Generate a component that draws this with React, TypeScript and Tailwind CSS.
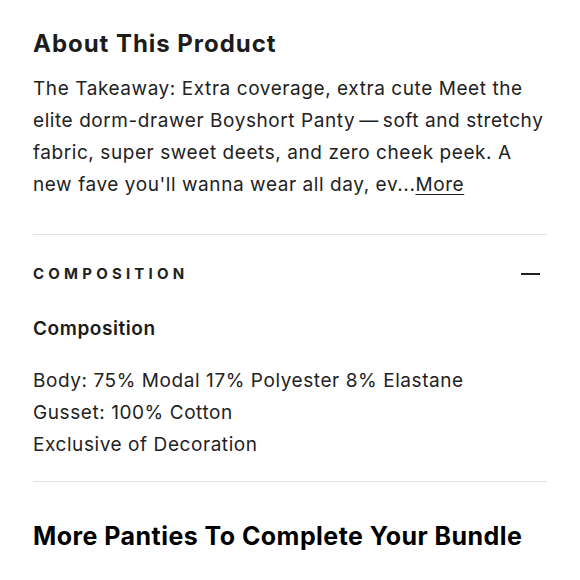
export default function App() {
  return (
    <div className="w-[580px] h-[580px] overflow-hidden bg-white px-[33px] pt-[26px] text-[#1a1a1a] font-['Inter',sans-serif]">
      <h2 className="text-[24px] font-bold leading-[36px] tracking-[0.04em] text-[#1c1c1c]">About This Product</h2>
      <p className="mt-[11px] text-[19px] leading-[32px] tracking-[0.03em] text-[#222] whitespace-nowrap">
        The Takeaway: Extra coverage, extra cute Meet the
        <br />
        elite dorm-drawer Boyshort Panty{"\u2009—\u2009"}soft and stretchy
        <br />
        fabric, super sweet deets, and zero cheek peek. A
        <br />
        new fave you'll wanna wear all day, ev...<a className="underline underline-offset-[3px]">More</a>
      </p>
      <div className="mt-[33px] border-t border-[#e3e3de]" />
      <div className="flex items-center justify-between h-[78px]">
        <span className="text-[15px] font-bold tracking-[0.28em] text-[#222]">COMPOSITION</span>
        <span className="block w-[19px] h-[2px] bg-[#222] mr-[7px]" />
      </div>
      <h3 className="text-[19px] font-semibold leading-[32px] tracking-[0.03em]">Composition</h3>
      <div className="mt-[20px] text-[19px] leading-[32px] tracking-[0.03em] text-[#222]">
        <p>Body: 75% Modal 17% Polyester 8% Elastane</p>
        <p>Gusset: 100% Cotton</p>
        <p>Exclusive of Decoration</p>
      </div>
      <div className="mt-[20px] border-t border-[#e3e3de]" />
      <h2 className="mt-[36px] text-[25px] font-bold leading-[36px] tracking-[0.018em] text-black">More Panties To Complete Your Bundle</h2>
    </div>
  );
}
